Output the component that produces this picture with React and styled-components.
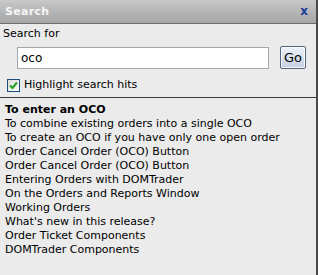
import React from "react";
import styled, { createGlobalStyle } from "styled-components";

const Global = createGlobalStyle`
  html, body { margin: 0; padding: 0; background: #ebebeb; }
  body { font-family: "DejaVu Sans", Verdana, sans-serif; }
  * { box-sizing: border-box; }
`;

const Window = styled.div`
  width: 318px;
  height: 275px;
  background: #ebebeb;
  border-right: 2px solid #4a4a4a;
  display: flex;
  flex-direction: column;
  overflow: hidden;
`;

const TitleBar = styled.div`
  height: 24px;
  flex: none;
  display: flex;
  align-items: center;
  justify-content: space-between;
  padding: 0 8px 1px 5px;
  background: linear-gradient(#c9c9c9, #b2b2b2 60%, #a6a6a6);
  border-bottom: 1px solid #6e6e6e;
`;

const Title = styled.span`
  font-weight: bold;
  font-size: 11px;
  letter-spacing: 0.3px;
  color: #f6f6f6;
`;

const Close = styled.span`
  font-weight: bold;
  font-size: 12px;
  color: #1c3c9c;
  line-height: 1;
`;

const SearchPanel = styled.div`
  padding: 3px 0 5px 3px;
  display: flex;
  flex-direction: column;
  border-bottom: 1px solid #3a3a3a;
`;

const Label = styled.div`
  font-size: 11px;
  line-height: 14px;
  color: #000;
`;

const InputRow = styled.div`
  display: flex;
  align-items: center;
  margin: 5px 0 0 14px;
`;

const TextBox = styled.div`
  width: 252px;
  height: 22px;
  background: #fff;
  border: 1px solid #a3a7ad;
  display: flex;
  align-items: center;
  padding-left: 3px;
  font-size: 12px;
  color: #000;
`;

const GoButton = styled.div`
  width: 26px;
  height: 23px;
  margin-left: 11px;
  border: 1px solid #56637c;
  border-radius: 2px;
  background: linear-gradient(#eef2f8, #d5deeb 55%, #c4cfe0);
  box-shadow: inset 0 0 0 1px #f7f9fc;
  display: flex;
  align-items: center;
  justify-content: center;
  font-size: 13px;
  color: #000;
`;

const CheckRow = styled.div`
  display: flex;
  align-items: center;
  gap: 4px;
  margin: 9px 0 0 4px;
  font-size: 11px;
  line-height: 14px;
`;

const Box = styled.span`
  width: 13px;
  height: 13px;
  border: 1px solid #1d4f7d;
  background: linear-gradient(135deg, #dcdcd6, #fdfdfb);
  display: flex;
  align-items: center;
  justify-content: center;
`;

const List = styled.ul`
  list-style: none;
  margin: 0;
  padding: 5px 0 0 5px;
`;

const Item = styled.li`
  font-size: 11px;
  line-height: 14px;
  color: #000;
  white-space: nowrap;
  font-weight: ${(p) => (p.$bold ? "bold" : "normal")};
`;

const items = [
  "To enter an OCO",
  "To combine existing orders into a single OCO",
  "To create an OCO if you have only one open order",
  "Order Cancel Order (OCO) Button",
  "Order Cancel Order (OCO) Button",
  "Entering Orders with DOMTrader",
  "On the Orders and Reports Window",
  "Working Orders",
  "What's new in this release?",
  "Order Ticket Components",
  "DOMTrader Components",
];

export default function App() {
  return (
    <>
      <Global />
      <Window>
        <TitleBar>
          <Title>Search</Title>
          <Close>x</Close>
        </TitleBar>
        <SearchPanel>
          <Label>Search for</Label>
          <InputRow>
            <TextBox>oco</TextBox>
            <GoButton>Go</GoButton>
          </InputRow>
          <CheckRow>
            <Box>
              <svg width="9" height="9" viewBox="0 0 9 9">
                <path d="M1 4.5 L3.5 7 L8 1.5" fill="none" stroke="#21a121" strokeWidth="2" />
              </svg>
            </Box>
            <span>Highlight search hits</span>
          </CheckRow>
        </SearchPanel>
        <List>
          {items.map((t, i) => (
            <Item key={i} $bold={i === 0}>
              {t}
            </Item>
          ))}
        </List>
      </Window>
    </>
  );
}
